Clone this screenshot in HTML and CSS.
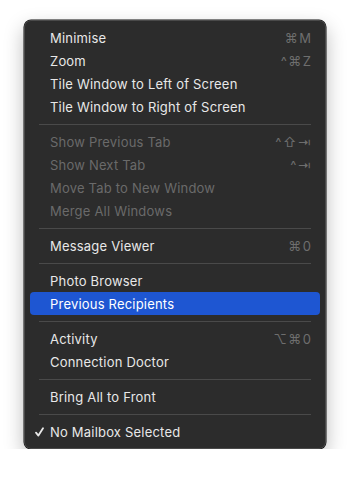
FILE: index.html
```html
<!DOCTYPE html>
<html>
<head>
<meta charset="utf-8">
<link rel="stylesheet" href="styles.css">
</head>
<body>
<div class="menu">
  <div class="item"><span class="check"></span><span class="label">Minimise</span><span class="key">⌘M</span></div>
  <div class="item"><span class="check"></span><span class="label">Zoom</span><span class="key">^⌘Z</span></div>
  <div class="item"><span class="check"></span><span class="label">Tile Window to Left of Screen</span></div>
  <div class="item"><span class="check"></span><span class="label">Tile Window to Right of Screen</span></div>
  <div class="sep"></div>
  <div class="item disabled"><span class="check"></span><span class="label">Show Previous Tab</span><span class="key">^⇧⇥</span></div>
  <div class="item disabled"><span class="check"></span><span class="label">Show Next Tab</span><span class="key">^⇥</span></div>
  <div class="item disabled"><span class="check"></span><span class="label">Move Tab to New Window</span></div>
  <div class="item disabled"><span class="check"></span><span class="label">Merge All Windows</span></div>
  <div class="sep"></div>
  <div class="item"><span class="check"></span><span class="label">Message Viewer</span><span class="key">⌘0</span></div>
  <div class="sep"></div>
  <div class="item"><span class="check"></span><span class="label">Photo Browser</span></div>
  <div class="item selected"><span class="check"></span><span class="label">Previous Recipients</span></div>
  <div class="sep"></div>
  <div class="item"><span class="check"></span><span class="label">Activity</span><span class="key">⌥⌘0</span></div>
  <div class="item"><span class="check"></span><span class="label">Connection Doctor</span></div>
  <div class="sep"></div>
  <div class="item"><span class="check"></span><span class="label">Bring All to Front</span></div>
  <div class="sep"></div>
  <div class="item"><span class="check"><svg width="9" height="10" viewBox="0 0 9 10"><path d="M1 5.6 L3.4 8.6 L8 1.2" fill="none" stroke="#e8e8e8" stroke-width="1.8" stroke-linecap="round" stroke-linejoin="round"/></svg></span><span class="label">No Mailbox Selected</span></div>
</div>
</body>
</html>
```
FILE: styles.css
```css
html, body {
  margin: 0;
  padding: 0;
  background: #ffffff;
}
body {
  padding: 20px 24px 0 24px;
  font-family: Inter, "Noto Sans", sans-serif;
}
.menu {
  width: 302px;
  box-sizing: border-box;
  background: #2c2c2c;
  border: 1px solid #4a4a4a;
  border-radius: 7px;
  padding: 5px 5px;
  box-shadow: 0 0 0 0.5px #111, 0 8px 20px rgba(0,0,0,0.28);
}
.item {
  display: flex;
  align-items: center;
  height: 23px;
  padding: 0 9px 0 5px;
  border-radius: 4px;
  color: #e8e8e8;
  font-size: 13px;
  letter-spacing: 0.2px;
}
.item.disabled { color: #6a6a6a; }
.item.selected { background: #1e56d2; color: #fff; }
.check {
  width: 15px;
  height: 23px;
  display: flex;
  align-items: center;
}
.label { flex: 1; }
.key {
  color: #6e6e6e;
  font-size: 13px;
  letter-spacing: 1.5px;
  margin-right: -1.5px;
}
.sep {
  height: 1px;
  background: #4a4a4a;
  margin: 5.5px 9px 5.5px 9px;
}
```
